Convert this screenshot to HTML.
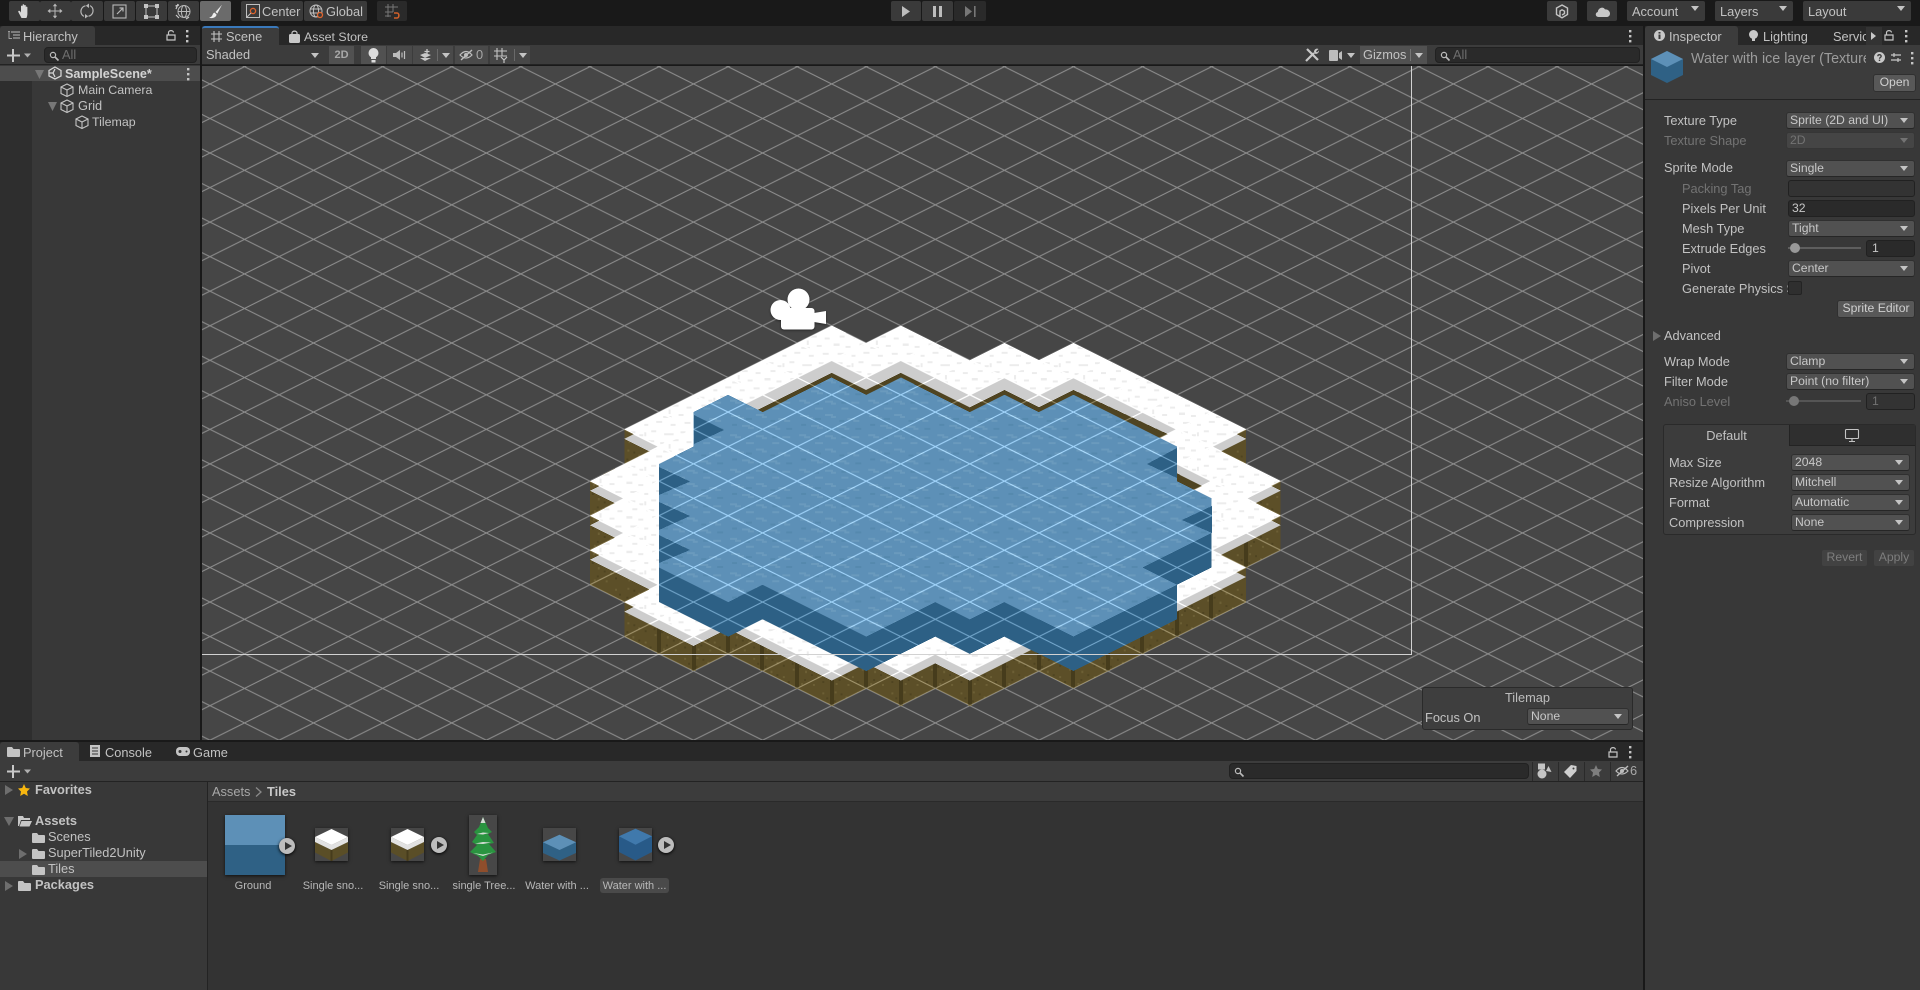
<!DOCTYPE html>
<html><head><meta charset="utf-8"><title>Unity</title>
<style>
html,body{margin:0;padding:0;width:1920px;height:990px;overflow:hidden;background:#191919;font-family:"Liberation Sans",sans-serif;font-size:12.8px;color:#c2c2c2}
div,span{box-sizing:border-box}
.a,.t,.b,.dd,.f,.i{position:absolute}
.t{white-space:nowrap;line-height:16px;height:16px}
.bd{font-weight:bold}
.dis{color:#737373}
.b{top:1px;height:20px;background:#3a3a3a;border-radius:2px}
.b.dim{background:#2a2a2a}
.i{display:block;overflow:visible}
.dd{height:17px;background:#515151;border:1px solid #303030;border-bottom-color:#262626;border-radius:3px;line-height:14px;padding-left:3px;white-space:nowrap;color:#c8c8c8;font-size:12.2px}
.dd:after{content:"";position:absolute;right:6px;top:5px;border-left:4px solid transparent;border-right:4px solid transparent;border-top:5px solid #c4c4c4}
.dd.off{background:#454545;color:#737373;border-color:#363636}
.dd.off:after{border-top-color:#737373}
.f{height:17px;background:#2a2a2a;border:1px solid #212121;border-radius:3px;line-height:15px;padding-left:3px;color:#c8c8c8;font-size:12.2px}
.sr{position:absolute;height:16px;background:#2a2a2a;border:1px solid #212121;border-radius:4px;line-height:14px;color:#6d6d6d;padding-left:17px}
.sr svg{position:absolute;left:4px;top:3px}
.btn{position:absolute;height:18px;background:#585858;border:1px solid #303030;border-radius:3px;text-align:center;line-height:15px;color:#d0d0d0;font-size:12.2px}
.tab{position:absolute;top:26px;height:19px;background:#3c3c3c;border-radius:3px 3px 0 0}
.th{position:absolute;background:#474747;box-shadow:0 1px 3px #111;overflow:hidden}
.lbl{position:absolute;top:879px;height:14px;line-height:14px;font-size:11px;text-align:center;color:#b8b8b8;white-space:nowrap}
.pl{position:absolute;width:16px;height:16px;border-radius:50%;background:#bdbdbd;box-shadow:0 1px 3px #000}
.pl:after{content:"";position:absolute;left:5.5px;top:3.5px;border-left:7px solid #333;border-top:4.5px solid transparent;border-bottom:4.5px solid transparent}
</style></head>
<body>
<svg width="0" height="0" style="position:absolute">
<defs>
<g id="cb"><path d="M7 1 L13 4 V10.5 L7 13.5 L1 10.5 V4 Z M1 4 L7 7 L13 4 M7 7 V13.5" fill="none" stroke="#c4c4c4" stroke-width="1.1"/></g>
<g id="lk"><path d="M1 6 H9 V11 H1 Z" fill="none" stroke="#c4c4c4" stroke-width="1.2"/><path d="M2.5 6 V3.5 C2.5 1 7.5 1 7.5 3.5" fill="none" stroke="#c4c4c4" stroke-width="1.2"/></g>
<g id="dt"><rect x="0" y="0" width="2.4" height="2.4" fill="#c4c4c4"/><rect x="0" y="5" width="2.4" height="2.4" fill="#c4c4c4"/><rect x="0" y="10" width="2.4" height="2.4" fill="#c4c4c4"/></g>
<g id="mg"><circle cx="4" cy="4" r="2.6" fill="none" stroke="#bbb" stroke-width="1.2"/><path d="M6 6 L9.5 9.5" stroke="#bbb" stroke-width="1.6"/></g>
<g id="fd"><path d="M0 2 Q0 1 1 1 H5 L6.5 3 H12 Q13 3 13 4 V10 Q13 11 12 11 H1 Q0 11 0 10 Z" fill="#c4c4c4"/></g>
<g id="ey"><path d="M1 7 Q7 0 13 7 Q7 13 1 7 Z" fill="none" stroke="#bdbdbd" stroke-width="1.2"/><circle cx="7" cy="7" r="2" fill="#bdbdbd"/><path d="M2 12 L13 2" stroke="#bdbdbd" stroke-width="1.4"/></g>
<pattern id="grd" patternUnits="userSpaceOnUse" x="935.3" y="515.7" width="69.08" height="34.54">
<path d="M0 0 L69.08 34.54 M0 34.54 L69.08 0" fill="none" stroke="#484848" stroke-width="1"/>
</pattern>
<pattern id="snw" patternUnits="userSpaceOnUse" x="624.4" y="325.7" width="69.08" height="34.54" shape-rendering="crispEdges">
<rect width="69.08" height="34.54" fill="#fff"/>
<g fill="#ececec"><rect x="4" y="2" width="7" height="2"/><rect x="15" y="5" width="4" height="2"/><rect x="27" y="1" width="5" height="2"/><rect x="40" y="4" width="9" height="2"/><rect x="56" y="2" width="5" height="2"/><rect x="8" y="10" width="5" height="2"/><rect x="22" y="11" width="8" height="2"/><rect x="36" y="13" width="4" height="2"/><rect x="48" y="10" width="6" height="2"/><rect x="62" y="12" width="5" height="2"/><rect x="2" y="18" width="6" height="2"/><rect x="14" y="20" width="5" height="2"/><rect x="28" y="18" width="4" height="2"/><rect x="39" y="21" width="8" height="2"/><rect x="54" y="19" width="5" height="2"/><rect x="6" y="27" width="8" height="2"/><rect x="20" y="29" width="4" height="2"/><rect x="32" y="26" width="6" height="2"/><rect x="46" y="29" width="5" height="2"/><rect x="60" y="27" width="6" height="2"/><rect x="20" y="3" width="2" height="4"/><rect x="44" y="15" width="2" height="4"/></g></pattern>
<pattern id="wat" patternUnits="userSpaceOnUse" x="659" y="377.5" width="69.08" height="34.54" shape-rendering="crispEdges">
<rect width="69.08" height="34.54" fill="#5d90b7"/>
<g fill="#6a9abd"><rect x="3" y="3" width="9" height="2"/><rect x="10" y="5" width="6" height="2"/><rect x="28" y="2" width="8" height="2"/><rect x="34" y="4" width="5" height="2"/><rect x="50" y="6" width="8" height="2"/><rect x="56" y="8" width="6" height="2"/><rect x="14" y="13" width="8" height="2"/><rect x="20" y="15" width="6" height="2"/><rect x="40" y="14" width="9" height="2"/><rect x="47" y="16" width="5" height="2"/><rect x="2" y="22" width="7" height="2"/><rect x="7" y="24" width="6" height="2"/><rect x="28" y="23" width="8" height="2"/><rect x="34" y="25" width="5" height="2"/><rect x="54" y="24" width="8" height="2"/><rect x="18" y="30" width="8" height="2"/><rect x="44" y="30" width="7" height="2"/></g>
<g fill="#5589ae"><rect x="18" y="6" width="6" height="2"/><rect x="42" y="8" width="5" height="2"/><rect x="4" y="12" width="5" height="2"/><rect x="30" y="17" width="6" height="2"/><rect x="58" y="16" width="6" height="2"/><rect x="16" y="25" width="6" height="2"/><rect x="44" y="24" width="5" height="2"/></g></pattern>
<pattern id="brn" patternUnits="userSpaceOnUse" x="589.9" y="481.2" width="34.54" height="34.54" shape-rendering="crispEdges">
<rect width="34.54" height="34.54" fill="#5c4f28"/>
<g fill="#6c5f35"><rect x="3" y="3" width="2" height="2"/><rect x="14" y="8" width="2" height="2"/><rect x="25" y="4" width="2" height="2"/><rect x="8" y="17" width="2" height="2"/><rect x="20" y="22" width="2" height="2"/><rect x="30" y="15" width="2" height="2"/><rect x="4" y="29" width="2" height="2"/><rect x="16" y="30" width="2" height="2"/></g>
<g fill="#4f4421"><rect x="9" y="5" width="2" height="2"/><rect x="20" y="11" width="2" height="2"/><rect x="2" y="12" width="2" height="2"/><rect x="29" y="9" width="2" height="2"/><rect x="14" y="20" width="2" height="2"/><rect x="25" y="27" width="2" height="2"/><rect x="7" y="25" width="2" height="2"/></g></pattern>
<polygon id="snowp" points="624.4,429.4 831.7,325.7 866.2,343 900.8,325.7 969.8,360.3 1004.4,343 1038.9,360.3 1073.5,343 1246.2,429.4 1211.6,446.6 1280.7,481.2 1246.2,498.4 1280.7,515.7 1211.6,550.2 1246.2,567.5 1073.5,653.9 1038.9,636.6 969.8,671.1 935.3,653.9 900.8,671.1 866.2,653.9 831.7,671.1 728.1,619.3 693.5,636.6 624.4,602.1 659,584.8 589.9,550.2 624.4,533 589.9,515.7 624.4,498.4 589.9,481.2 659,446.6"/>
</defs></svg>

<!-- top toolbar -->
<div class="b" style="left:9px;width:31px"><svg class="i" style="left:7px;top:2px" width="16" height="16" viewBox="0 0 16 16"><path d="M5.5 15 L2.3 9 C1.8 7.8 3.3 7.2 4.1 8.3 L5 9.6 V3.4 C5 2.4 6.6 2.4 6.6 3.4 V8 V2 C6.6 1 8.2 1 8.2 2 V8 V2.8 C8.2 1.8 9.8 1.8 9.8 2.8 V8.5 V4.4 C9.8 3.4 11.4 3.4 11.4 4.4 V10.5 C11.4 12.5 11 13.8 10.4 15 Z" fill="#d8d8d8"/></svg></div>
<div class="b" style="left:40px;width:31px"><svg class="i" style="left:7px;top:2px" width="16" height="16" viewBox="0 0 16 16"><path d="M8 3 V13 M3 8 H13" stroke="#b8b8b8" stroke-width="1"/><path d="M8 0.5 L10.2 3.3 H5.8 Z M8 15.5 L10.2 12.7 H5.8 Z M0.5 8 L3.3 5.8 V10.2 Z M15.5 8 L12.7 5.8 V10.2 Z" fill="#b8b8b8"/></svg></div>
<div class="b" style="left:71px;width:32px"><svg class="i" style="left:8px;top:2px" width="16" height="16" viewBox="0 0 16 16"><path d="M6.5 2.8 C2.5 3.6 0.8 8 2.8 11.4 C3.4 12.4 4.2 13 5 13.4 M9.5 13.2 C13.5 12.4 15.2 8 13.2 4.6 C12.6 3.6 11.8 3 11 2.6" fill="none" stroke="#b8b8b8" stroke-width="1.2"/><path d="M10 0.5 V5 L6.8 2.8 Z M6 11 V15.5 L9.2 13.2 Z" fill="#b8b8b8"/></svg></div>
<div class="b" style="left:104px;width:31px"><svg class="i" style="left:8px;top:3px" width="15" height="15" viewBox="0 0 15 15"><rect x="1" y="1" width="13" height="13" fill="none" stroke="#b8b8b8" stroke-width="1.1"/><path d="M5 10 L11 4 M7.5 4 H11 V7.5" fill="none" stroke="#b8b8b8" stroke-width="1.2"/></svg></div>
<div class="b" style="left:136px;width:31px"><svg class="i" style="left:8px;top:3px" width="15" height="15" viewBox="0 0 15 15"><rect x="2" y="2" width="11" height="11" fill="none" stroke="#c4c4c4" stroke-width="1"/><g fill="#c4c4c4"><rect x="0" y="0" width="4" height="4"/><rect x="11" y="0" width="4" height="4"/><rect x="0" y="11" width="4" height="4"/><rect x="11" y="11" width="4" height="4"/></g></svg></div>
<div class="b" style="left:168px;width:31px"><svg class="i" style="left:7px;top:2px" width="17" height="17" viewBox="0 0 17 17"><circle cx="9" cy="8.5" r="6" fill="none" stroke="#b8b8b8" stroke-width="1"/><ellipse cx="9" cy="8.5" rx="2.6" ry="6" fill="none" stroke="#b8b8b8"/><path d="M3 8.5 H15" stroke="#b8b8b8"/><path d="M0.5 3 L4 2 M3 1 L1 6 M1 12 L4 15 M11 16 L14 14" stroke="#c8c8c8" stroke-width="1.2" fill="none"/></svg></div>
<div class="b" style="left:200px;width:31px;background:#6b6b6b"><svg class="i" style="left:8px;top:3px" width="15" height="15" viewBox="0 0 15 15"><path d="M14 0.8 L7.5 8 L9.3 9.6 Z" fill="#eee"/><path d="M6.6 8.6 C4.5 9 5 11 3.6 12.4 C2.8 13.2 1.6 13.5 1 13.6 C3.5 14.6 7.6 14.2 8.6 10.6 Z" fill="#eee"/></svg></div>
<div class="b" style="left:241px;width:62px"><svg class="i" style="left:5px;top:3px" width="14" height="14" viewBox="0 0 14 14"><rect x="0.5" y="0.5" width="13" height="13" fill="none" stroke="#c0c0c0"/><circle cx="7" cy="7" r="2.6" fill="none" stroke="#e2642c" stroke-width="1.3"/><path d="M1 13 L5 9" stroke="#c0c0c0"/></svg><span class="t" style="left:21px;top:3px">Center</span></div>
<div class="b" style="left:304px;width:63px"><svg class="i" style="left:5px;top:3px" width="15" height="15" viewBox="0 0 15 15"><circle cx="7" cy="7" r="6" fill="none" stroke="#c0c0c0"/><ellipse cx="7" cy="7" rx="2.6" ry="6" fill="none" stroke="#c0c0c0"/><path d="M1 5 H13 M1 9 H13" stroke="#c0c0c0"/><circle cx="11" cy="11" r="2.5" fill="#3a3a3a" stroke="#e2642c" stroke-width="1.3"/></svg><span class="t" style="left:22px;top:3px">Global</span></div>
<div class="b dim" style="left:377px;width:30px"><svg class="i" style="left:8px;top:3px" width="15" height="15" viewBox="0 0 15 15"><path d="M3 0 V13 M8 0 V8 M0 3 H13 M0 8 H8 M0 12 H6" stroke="#777" stroke-width="1"/><path d="M9 9 H12 C14.5 9 14.5 14 12 14 H9" fill="none" stroke="#d0602a" stroke-width="1.6"/></svg></div>

<div class="b" style="left:891px;width:30px"><svg class="i" style="left:10px;top:5px" width="10" height="11" viewBox="0 0 10 11"><path d="M1 0 L9 5.5 L1 11 Z" fill="#bdbdbd"/></svg></div>
<div class="b" style="left:922px;width:31px"><svg class="i" style="left:11px;top:5px" width="9" height="11" viewBox="0 0 9 11"><rect x="0" width="3" height="11" fill="#bdbdbd"/><rect x="6" width="3" height="11" fill="#bdbdbd"/></svg></div>
<div class="b dim" style="left:954px;width:32px"><svg class="i" style="left:11px;top:5px" width="11" height="11" viewBox="0 0 11 11"><path d="M0 0 L7 5.5 L0 11 Z" fill="#777"/><rect x="9" width="1.6" height="11" fill="#777"/></svg></div>

<div class="b" style="left:1547px;width:30px"><svg class="i" style="left:8px;top:3px" width="14" height="15" viewBox="0 0 14 15"><path d="M7 1 L12.5 4 V10.5 L7 13.8 L1.5 10.5 V4 Z M5 12 V7 L7 5.8 L9.5 7.2 V9.5 L7 11" fill="none" stroke="#c4c4c4" stroke-width="1.4"/></svg></div>
<div class="b" style="left:1587px;width:30px"><svg class="i" style="left:8px;top:5px" width="15" height="11" viewBox="0 0 15 11"><path d="M3.5 11 C0 11 0 6.5 2.8 6 C3 2 8 0 10 3.4 C13 3 15 5.5 15 7.5 C15 10 13 11 12 11 Z" fill="#c8c8c8"/></svg></div>
<div class="dd" style="left:1627px;top:1px;width:78px;height:20px;background:#3a3a3a;border:0;line-height:22px;padding-left:5px;border-radius:2px;color:#c2c2c2;font-size:12.8px">Account</div>
<div class="dd" style="left:1715px;top:1px;width:78px;height:20px;background:#3a3a3a;border:0;line-height:22px;padding-left:5px;border-radius:2px;color:#c2c2c2;font-size:12.8px">Layers</div>
<div class="dd" style="left:1803px;top:1px;width:108px;height:20px;background:#3a3a3a;border:0;line-height:22px;padding-left:5px;border-radius:2px;color:#c2c2c2;font-size:12.8px">Layout</div>

<!-- hierarchy panel -->
<div class="a" style="left:0;top:26px;width:200px;height:714px;background:#383838"></div>
<div class="a" style="left:0;top:26px;width:200px;height:19px;background:#282828"></div>
<div class="tab" style="left:0;width:95px"></div>
<svg class="i" style="left:8px;top:31px" width="12" height="10" viewBox="0 0 12 10"><path d="M3 1 H12 M5 4 H12 M5 7 H12" stroke="#bbb" stroke-width="1"/><path d="M0 0.5 H2 M1 1 V7.5 H4" stroke="#bbb" fill="none" stroke-width=".8"/></svg>
<div class="t" style="left:23px;top:29px">Hierarchy</div>
<svg class="i" style="left:166px;top:29px" width="10" height="12"><use href="#lk"/></svg>
<svg class="i" style="left:186px;top:30px" width="3" height="13"><use href="#dt"/></svg>
<div class="a" style="left:0;top:45px;width:200px;height:20px;background:#3c3c3c;border-bottom:1px solid #232323"></div>
<svg class="i" style="left:7px;top:49px" width="24" height="13" viewBox="0 0 24 13"><path d="M6 0 V13 M0 6.5 H13" stroke="#c8c8c8" stroke-width="2"/><path d="M17 4.5 H24 L20.5 8.5 Z" fill="#b0b0b0"/></svg>
<div class="sr" style="left:44px;top:47px;width:153px"><svg width="11" height="11"><use href="#mg"/></svg>All</div>
<div class="a" style="left:0;top:66px;width:32px;height:674px;background:#2e2e2e"></div>
<div class="a" style="left:0;top:66px;width:200px;height:15px;background:#4d4d4d"></div>
<svg class="i" style="left:35px;top:70px" width="9" height="9"><path d="M0 0 H9 L4.5 9 Z" fill="#777"/></svg>
<svg class="i" style="left:48px;top:66px" width="14" height="14" viewBox="0 0 14 14"><path d="M7 1 L13 4.5 V10 L7 13 L1 10 V4.5 Z M1 7 H5 L7 3 M7 11 L5 7" fill="none" stroke="#d4d4d4" stroke-width="1.3"/></svg>
<div class="t bd" style="left:65px;top:66px;color:#d4d4d4;font-size:12.6px">SampleScene*</div>
<svg class="i" style="left:187px;top:68px" width="3" height="13"><use href="#dt"/></svg>
<svg class="i" style="left:60px;top:83px" width="14" height="14"><use href="#cb"/></svg>
<div class="t" style="left:78px;top:82px;font-size:12.4px">Main Camera</div>
<svg class="i" style="left:48px;top:102px" width="9" height="9"><path d="M0 0 H9 L4.5 9 Z" fill="#777"/></svg>
<svg class="i" style="left:60px;top:99px" width="14" height="14"><use href="#cb"/></svg>
<div class="t" style="left:78px;top:98px">Grid</div>
<svg class="i" style="left:75px;top:115px" width="14" height="14"><use href="#cb"/></svg>
<div class="t" style="left:92px;top:114px;font-size:12.4px">Tilemap</div>

<!-- scene header -->
<div class="a" style="left:202px;top:26px;width:1441px;height:19px;background:#282828"></div>
<div class="tab" style="left:202px;width:77px;border-top:2px solid #3a79bb"></div>
<svg class="i" style="left:211px;top:31px" width="11" height="11" viewBox="0 0 11 11"><path d="M3 0 V11 M8 0 V11 M0 3 H11 M0 8 H11" stroke="#c4c4c4" stroke-width="1.1"/></svg>
<div class="t" style="left:226px;top:29px">Scene</div>
<svg class="i" style="left:289px;top:30px" width="11" height="13" viewBox="0 0 11 13"><rect y="4" width="11" height="9" rx="1.5" fill="#c8c8c8"/><path d="M3 5 V3 C3 0.5 8 0.5 8 3 V5" fill="none" stroke="#c8c8c8" stroke-width="1.2"/></svg>
<div class="t" style="left:304px;top:29px;font-size:12.4px">Asset Store</div>
<svg class="i" style="left:1629px;top:30px" width="3" height="13"><use href="#dt"/></svg>
<div class="a" style="left:202px;top:45px;width:1441px;height:20px;background:#3c3c3c;border-bottom:1px solid #232323"></div>
<div class="t" style="left:206px;top:47px">Shaded</div>
<svg class="i" style="left:311px;top:53px" width="8" height="5"><path d="M0 0 H8 L4 5 Z" fill="#c4c4c4"/></svg>
<div class="a" style="left:329px;top:46px;width:25px;height:18px;background:#515151;text-align:center;line-height:18px;font-size:11px;font-weight:bold;color:#a8a8a8">2D</div>
<div class="a" style="left:361px;top:46px;width:25px;height:18px;background:#515151"></div>
<svg class="i" style="left:368px;top:48px" width="11" height="15" viewBox="0 0 11 15"><circle cx="5.5" cy="5" r="5" fill="#ddd"/><rect x="3" y="8" width="5" height="3" fill="#ddd"/><rect x="3.5" y="12" width="4" height="2.5" fill="#ddd"/></svg>
<div class="a" style="left:387px;top:46px;width:25px;height:18px;background:#4a4a4a"></div>
<svg class="i" style="left:393px;top:49px" width="13" height="12" viewBox="0 0 13 12"><path d="M0 4 H3 L7 1 V11 L3 8 H0 Z" fill="#bdbdbd"/><path d="M9 3.5 V8.5 M11.5 2 V10" stroke="#bdbdbd" stroke-width="1.2"/></svg>
<div class="a" style="left:413px;top:46px;width:40px;height:18px;background:#4a4a4a"></div>
<svg class="i" style="left:418px;top:48px" width="15" height="14" viewBox="0 0 15 14"><path d="M2 7 L7 5 L13 7 L7 10 Z M2 10 L7 13 L13 10" fill="#c8c8c8"/><path d="M9 1 V6 M6.5 3.5 H11.5" stroke="#c8c8c8" stroke-width="1.3"/></svg>
<div class="a" style="left:437px;top:49px;width:1px;height:12px;background:#6a6a6a"></div>
<svg class="i" style="left:442px;top:53px" width="8" height="5"><path d="M0 0 H8 L4 5 Z" fill="#c4c4c4"/></svg>
<div class="a" style="left:455px;top:46px;width:33px;height:18px;background:#4a4a4a"></div>
<svg class="i" style="left:459px;top:48px" width="14" height="14"><use href="#ey"/></svg>
<div class="t" style="left:476px;top:47px;color:#a8a8a8">0</div>
<div class="a" style="left:490px;top:46px;width:40px;height:18px;background:#474747"></div>
<svg class="i" style="left:494px;top:48px" width="14" height="15" viewBox="0 0 14 15"><path d="M3 0 V12 M8 0 V8 M0 3 H13 M0 8 H13" stroke="#c4c4c4" stroke-width="1.1"/><path d="M7 9 L10 12 L13 9 M10 12 V15" stroke="#c4c4c4" stroke-width="1.2" fill="none"/></svg>
<div class="a" style="left:514px;top:49px;width:1px;height:12px;background:#6a6a6a"></div>
<svg class="i" style="left:519px;top:53px" width="8" height="5"><path d="M0 0 H8 L4 5 Z" fill="#c4c4c4"/></svg>

<svg class="i" style="left:1305px;top:48px" width="14" height="14" viewBox="0 0 14 14"><path d="M1 13 L9 5 M2 1 L13 12" stroke="#c8c8c8" stroke-width="2.2"/><path d="M9 4 C9 1.5 11.5 0 13.5 1 L11 3.3 L12 4.5 L14 2.5 C14 5 12 6.5 9.5 5.5 Z" fill="#c8c8c8"/></svg>
<svg class="i" style="left:1329px;top:50px" width="14" height="11" viewBox="0 0 14 11"><rect width="9" height="11" rx="1" fill="#bdbdbd"/><path d="M10 3 L13 1 V10 L10 8 Z" fill="#bdbdbd"/></svg>
<svg class="i" style="left:1347px;top:53px" width="8" height="5"><path d="M0 0 H8 L4 5 Z" fill="#c4c4c4"/></svg>
<div class="a" style="left:1360px;top:46px;width:67px;height:18px;background:#515151"></div>
<div class="t" style="left:1363px;top:47px">Gizmos</div>
<div class="a" style="left:1410px;top:49px;width:1px;height:12px;background:#757575"></div>
<svg class="i" style="left:1415px;top:53px" width="8" height="5"><path d="M0 0 H8 L4 5 Z" fill="#c4c4c4"/></svg>
<div class="sr" style="left:1435px;top:47px;width:205px"><svg width="11" height="11"><use href="#mg"/></svg>All</div>

<!-- scene view -->
<svg class="i" style="left:202px;top:66px;background:#464646;overflow:hidden" width="1441" height="674" viewBox="202 66 1441 674">
<polygon fill="url(#brn)" shape-rendering="crispEdges" points="624.4,429.4 831.7,325.7 866.2,343 900.8,325.7 969.8,360.3 1004.4,343 1038.9,360.3 1073.5,343 1246.2,429.4 1246.2,463.9 1280.7,481.2 1280.7,550.2 1246.2,567.5 1246.2,602.1 1073.5,688.4 1038.9,671.1 969.8,705.7 935.3,688.4 900.8,705.7 866.2,688.4 831.7,705.7 728.1,653.9 693.5,671.1 624.4,636.6 624.4,602.1 589.9,584.8 589.9,481.2 624.4,463.9"/>
<g fill="#463c1c" shape-rendering="crispEdges">
<rect x="657" y="619" width="4" height="36"/><rect x="692" y="637" width="4" height="34"/><rect x="726" y="619" width="4" height="35"/><rect x="760" y="637" width="4" height="34"/><rect x="795" y="654" width="4" height="35"/><rect x="830" y="671" width="4" height="35"/><rect x="864" y="654" width="4" height="34"/><rect x="899" y="671" width="4" height="35"/><rect x="933" y="654" width="4" height="34"/><rect x="968" y="671" width="4" height="35"/><rect x="1002" y="654" width="4" height="34"/><rect x="1037" y="637" width="4" height="34"/><rect x="1071" y="654" width="4" height="34"/><rect x="1106" y="637" width="4" height="34"/><rect x="1140" y="619" width="4" height="35"/><rect x="1175" y="602" width="4" height="35"/><rect x="1209" y="585" width="4" height="35"/><rect x="1244" y="533" width="4" height="35"/><rect x="622" y="533" width="4" height="35"/><rect x="622" y="498" width="4" height="35"/><rect x="1244" y="498" width="4" height="35"/>
</g>
<use href="#snowp" fill="#cdcdcd" y="9.5" shape-rendering="crispEdges"/>
<use href="#snowp" fill="url(#snw)" shape-rendering="crispEdges"/>
<!-- inner back edge of the snow ring: brown wall and grey snow lip behind the water -->
<polygon fill="#4f4421" shape-rendering="crispEdges" points="728.1,412.1 831.7,360.3 866.2,377.5 900.8,360.3 969.8,394.8 1004.4,377.5 1038.9,394.8 1073.5,377.5 1177.1,429.4 1142.5,446.6 1073.5,450 760,450"/>
<polygon fill="#cdcdcd" shape-rendering="crispEdges" points="728.1,412.1 831.7,360.3 866.2,377.5 900.8,360.3 969.8,394.8 1004.4,377.5 1038.9,394.8 1073.5,377.5 1177.1,429.4 1167.7,434.1 1073.5,390 1038.9,407.3 1004.4,390 969.8,407.3 900.8,372.8 866.2,390 831.7,372.8 728.1,424.6"/>
<polygon fill="#4f4421" shape-rendering="crispEdges" points="1177.1,463.9 1211.6,481.2 1177.1,498.4"/>
<polygon fill="#cdcdcd" shape-rendering="crispEdges" points="1177.1,463.9 1211.6,481.2 1202,486 1177.1,473.4"/>
<polygon fill="#2d6085" shape-rendering="crispEdges" points="693.5,412.1 728.1,394.8 762.6,412.1 831.7,377.5 866.2,394.8 900.8,377.5 969.8,412.1 1004.4,394.8 1038.9,412.1 1073.5,394.8 1177.1,446.6 1177.1,481.2 1211.6,498.4 1211.6,567.5 1177.1,584.8 1177.1,619.3 1073.5,671.1 1004.4,636.6 969.8,653.9 935.3,636.6 866.2,671.1 762.6,619.3 728.1,636.6 659,602.1 659,463.9 693.5,446.6"/>
<polygon fill="url(#wat)" shape-rendering="crispEdges" points="693.5,412.1 728.1,394.8 762.6,412.1 831.7,377.5 866.2,394.8 900.8,377.5 969.8,412.1 1004.4,394.8 1038.9,412.1 1073.5,394.8 1177.1,446.6 1177.1,481.2 1211.6,498.4 1211.6,533 1142.5,567.5 1177.1,584.8 1073.5,636.6 1004.4,602.1 969.8,619.3 935.3,602.1 866.2,636.6 762.6,584.8 728.1,602.1 659,567.5 659,463.9 693.5,446.6"/>
<g fill="#2d6085" shape-rendering="crispEdges">
<polygon points="694,415 724,430 694,444"/>
<polygon points="659,467 690,481.5 659,495"/>
<polygon points="659,502 690,516 659,530"/>
<polygon points="659,535 690,550 659,563"/>
<polygon points="1177,448 1147,464 1177,478"/>
<polygon points="1212,506 1182,520 1212,533"/>
</g>
<rect x="202" y="66" width="1441" height="674" fill="url(#grd)" style="mix-blend-mode:plus-lighter"/>
<path d="M1411.5 66 V654.5 H202" fill="none" stroke="#d2d2d2" stroke-width="1" shape-rendering="crispEdges"/>
<g fill="#fff" style="filter:drop-shadow(0 1px 1px rgba(0,0,0,.45))">
<circle cx="798.5" cy="299.5" r="11"/><circle cx="780.5" cy="310" r="10"/><rect x="781" y="308" width="33.5" height="21.5" rx="3"/><path d="M814 313 L826 311 V324 L814 322 Z"/>
</g>
</svg>

<!-- tilemap overlay -->
<div class="a" style="left:1422px;top:687px;width:211px;height:43px;background:#3e3e3e;border:1px solid #2a2a2a;border-radius:3px"></div>
<div class="t" style="left:1422px;top:690px;width:211px;text-align:center;color:#bdbdbd">Tilemap</div>
<div class="t" style="left:1425px;top:710px">Focus On</div>
<div class="dd" style="left:1527px;top:708px;width:102px">None</div>

<!-- project panel -->
<div class="a" style="left:0;top:742px;width:1643px;height:248px;background:#333"></div>
<div class="a" style="left:0;top:742px;width:1643px;height:19px;background:#282828"></div>
<div class="tab" style="left:0;top:742px;width:79px"></div>
<svg class="i" style="left:7px;top:746px" width="13" height="12"><use href="#fd"/></svg>
<div class="t" style="left:23px;top:745px">Project</div>
<svg class="i" style="left:90px;top:745px" width="10" height="12" viewBox="0 0 10 12"><rect width="10" height="12" fill="#c4c4c4"/><path d="M2 3 H8 M2 6 H8 M2 9 H8" stroke="#333" stroke-width="1"/></svg>
<div class="t" style="left:105px;top:745px">Console</div>
<svg class="i" style="left:176px;top:747px" width="14" height="9" viewBox="0 0 14 9"><rect width="14" height="9" rx="4" fill="#c4c4c4"/><circle cx="4" cy="4.5" r="1.5" fill="#333"/><circle cx="10.5" cy="4.5" r="1" fill="#333"/></svg>
<div class="t" style="left:193px;top:745px">Game</div>
<svg class="i" style="left:1608px;top:746px" width="10" height="12"><use href="#lk"/></svg>
<svg class="i" style="left:1629px;top:746px" width="3" height="13"><use href="#dt"/></svg>
<div class="a" style="left:0;top:761px;width:1643px;height:21px;background:#3c3c3c;border-bottom:1px solid #232323"></div>
<svg class="i" style="left:7px;top:765px" width="24" height="13" viewBox="0 0 24 13"><path d="M6 0 V13 M0 6.5 H13" stroke="#c8c8c8" stroke-width="2"/><path d="M17 4.5 H24 L20.5 8.5 Z" fill="#b0b0b0"/></svg>
<div class="sr" style="left:1229px;top:763px;width:300px;padding:0"><svg width="11" height="11"><use href="#mg"/></svg></div>
<div class="a" style="left:1532px;top:762px;width:1px;height:19px;background:#2a2a2a"></div>
<svg class="i" style="left:1537px;top:763px" width="15" height="16" viewBox="0 0 15 16"><circle cx="5" cy="11" r="4.5" fill="#c4c4c4"/><rect x="1" y="0.5" width="7" height="6" fill="#c4c4c4"/><path d="M9 8 L11.5 3 L14.5 9 Z" fill="#c4c4c4"/></svg>
<div class="a" style="left:1558px;top:762px;width:1px;height:19px;background:#2a2a2a"></div>
<svg class="i" style="left:1564px;top:765px" width="13" height="13" viewBox="0 0 13 13"><path d="M0 7 L7 0 L12.5 1 V6 L6 13 Z" fill="#cfcfcf"/><circle cx="9.5" cy="3.5" r="1" fill="#3c3c3c"/></svg>
<div class="a" style="left:1584px;top:762px;width:1px;height:19px;background:#2a2a2a"></div>
<svg class="i" style="left:1590px;top:765px" width="12" height="12" viewBox="0 0 12 12"><path d="M6 0 L7.8 4 L12 4.5 L9 7.5 L9.8 12 L6 9.8 L2.2 12 L3 7.5 L0 4.5 L4.2 4 Z" fill="#7e7e7e"/></svg>
<div class="a" style="left:1610px;top:762px;width:1px;height:19px;background:#2a2a2a"></div>
<svg class="i" style="left:1615px;top:764px" width="14" height="14"><use href="#ey"/></svg>
<div class="t" style="left:1630px;top:763px;color:#a8a8a8">6</div>

<div class="a" style="left:0;top:782px;width:207px;height:208px;background:#383838"></div>
<div class="a" style="left:207px;top:782px;width:1px;height:208px;background:#232323"></div>
<div class="a" style="left:208px;top:782px;width:1435px;height:20px;background:#3c3c3c;border-bottom:1px solid #2a2a2a"></div>
<svg class="i" style="left:5px;top:785px" width="8" height="10"><path d="M0 0 L8 5 L0 10 Z" fill="#6e6e6e"/></svg>
<svg class="i" style="left:18px;top:784px" width="12" height="12" viewBox="0 0 12 12"><path d="M6 0 L7.8 4 L12 4.5 L9 7.5 L9.8 12 L6 9.8 L2.2 12 L3 7.5 L0 4.5 L4.2 4 Z" fill="#f7b60f"/></svg>
<div class="t bd" style="left:35px;top:782px">Favorites</div>
<svg class="i" style="left:4px;top:817px" width="10" height="9"><path d="M0 0 H10 L5 9 Z" fill="#6e6e6e"/></svg>
<svg class="i" style="left:18px;top:815px" width="14" height="12" viewBox="0 0 14 12"><path d="M0 1 H5 L6 3 H12 V5 H3 L1 11 H0 Z M3.5 6 H14 L11.5 11.5 H1.5 Z" fill="#c8c8c8"/></svg>
<div class="t bd" style="left:35px;top:813px">Assets</div>
<svg class="i" style="left:32px;top:832px" width="13" height="12"><use href="#fd"/></svg>
<div class="t" style="left:48px;top:829px">Scenes</div>
<svg class="i" style="left:19px;top:849px" width="8" height="10"><path d="M0 0 L8 5 L0 10 Z" fill="#6e6e6e"/></svg>
<svg class="i" style="left:32px;top:848px" width="13" height="12"><use href="#fd"/></svg>
<div class="t" style="left:48px;top:845px">SuperTiled2Unity</div>
<div class="a" style="left:0;top:861px;width:207px;height:16px;background:#4d4d4d"></div>
<svg class="i" style="left:32px;top:864px" width="13" height="12"><use href="#fd"/></svg>
<div class="t" style="left:48px;top:861px">Tiles</div>
<svg class="i" style="left:5px;top:881px" width="8" height="10"><path d="M0 0 L8 5 L0 10 Z" fill="#6e6e6e"/></svg>
<svg class="i" style="left:18px;top:880px" width="13" height="12"><use href="#fd"/></svg>
<div class="t bd" style="left:35px;top:877px">Packages</div>
<div class="t" style="left:212px;top:784px;color:#a8a8a8">Assets</div>
<svg class="i" style="left:255px;top:787px" width="7" height="10" viewBox="0 0 7 10"><path d="M1 0.5 L6 5 L1 9.5" fill="none" stroke="#8a8a8a" stroke-width="1.3"/></svg>
<div class="t bd" style="left:267px;top:784px;color:#c8c8c8">Tiles</div>

<div class="th" style="left:225px;top:815px;width:60px;height:60px;background:#2f6185"><div class="a" style="left:0;top:0;width:60px;height:30px;background:#5d90b7"></div></div>
<div class="pl" style="left:279px;top:838px"></div>
<svg class="th" style="left:315px;top:828px" width="33" height="33" viewBox="0 0 33 33"><path d="M0 9 L16.5 17 L33 9 V24.5 L16.5 33 L0 24.5 Z" fill="#5a4e27"/><path d="M16.5 21 V33" stroke="#463c1c" stroke-width="2"/><path d="M0 9 L16.5 17 L33 9 V14 L16.5 22 L0 14 Z" fill="#e2e2e2"/><path d="M16.5 1 L33 9 L16.5 17 L0 9 Z" fill="#fff"/></svg>
<svg class="th" style="left:391px;top:828px" width="33" height="33" viewBox="0 0 33 33"><path d="M0 9 L16.5 17 L33 9 V24.5 L16.5 33 L0 24.5 Z" fill="#5a4e27"/><path d="M16.5 21 V33" stroke="#463c1c" stroke-width="2"/><path d="M0 9 L16.5 17 L33 9 V14 L16.5 22 L0 14 Z" fill="#e2e2e2"/><path d="M16.5 1 L33 9 L16.5 17 L0 9 Z" fill="#fff"/></svg>
<div class="pl" style="left:431px;top:837px"></div>
<svg class="th" style="left:469px;top:815px" width="28" height="60" viewBox="0 0 28 60"><path d="M11 44 H17 L19 57 H9 Z" fill="#8f4e2c"/><path d="M14 2 L19 13 L23 17 L19 19 L25 28 L20 29 L27 37 L19 40 L14 46 L9 41 L1 37 L8 30 L3 27 L8 20 L5 17 L10 12 Z" fill="#2a9440"/><path d="M11.5 8 L14 2 L16.5 8 Z M8 19 L14 17.5 L20 18 L14 19.5 Z M6 28.5 L14 27 L22 27.5 L14 29 Z M4 38 L14 39.5 L24 37.5 L14 41 Z" fill="#d4dcd4"/></svg>
<svg class="th" style="left:543px;top:828px" width="33" height="33" viewBox="0 0 33 33"><path d="M0 14.3 L16.5 6.7 L33 14.3 V25 L16.5 32.5 L0 25 Z" fill="#2f6185"/><path d="M16.5 6.7 L33 14.3 L16.5 22 L0 14.3 Z" fill="#5d90b7"/></svg>
<svg class="th" style="left:619px;top:828px" width="33" height="33" viewBox="0 0 33 33"><path d="M0 8.3 L16.5 0.7 L33 8.3 V24 L16.5 32.5 L0 24 Z" fill="#285a88"/><path d="M16.5 0.7 L33 8.3 L16.5 16.7 L0 8.3 Z" fill="#4079ac"/></svg>
<div class="pl" style="left:658px;top:837px"></div>
<div class="lbl" style="left:213px;width:80px">Ground</div>
<div class="lbl" style="left:298px;width:70px">Single sno...</div>
<div class="lbl" style="left:374px;width:70px">Single sno...</div>
<div class="lbl" style="left:449px;width:70px">single Tree...</div>
<div class="lbl" style="left:522px;width:70px">Water with ...</div>
<div class="a" style="left:600px;top:878px;width:69px;height:15px;background:#4a4a4a;border-radius:3px"></div>
<div class="lbl" style="left:600px;width:69px">Water with ...</div>

<!-- inspector -->
<div class="a" style="left:1645px;top:26px;width:275px;height:964px;background:#383838"></div>
<div class="a" style="left:1645px;top:26px;width:275px;height:19px;background:#282828"></div>
<div class="tab" style="left:1645px;width:93px"></div>
<svg class="i" style="left:1654px;top:30px" width="11" height="11" viewBox="0 0 11 11"><circle cx="5.5" cy="5.5" r="5.5" fill="#c8c8c8"/><rect x="4.5" y="4.5" width="2" height="4.5" fill="#3c3c3c"/><rect x="4.5" y="2" width="2" height="1.6" fill="#3c3c3c"/></svg>
<div class="t" style="left:1669px;top:29px">Inspector</div>
<svg class="i" style="left:1749px;top:30px" width="9" height="13" viewBox="0 0 9 13"><circle cx="4.5" cy="4.5" r="4.5" fill="#c8c8c8"/><rect x="3" y="8" width="3" height="3" fill="#c8c8c8"/></svg>
<div class="t" style="left:1763px;top:29px">Lighting</div>
<div class="t" style="left:1833px;top:29px;width:33px;overflow:hidden">Services</div>
<div class="a" style="left:1866px;top:27px;width:16px;height:18px;background:#333"></div>
<svg class="i" style="left:1871px;top:32px" width="5" height="8"><path d="M0 0 L5 4 L0 8 Z" fill="#c8c8c8"/></svg>
<svg class="i" style="left:1884px;top:29px" width="10" height="12"><use href="#lk"/></svg>
<svg class="i" style="left:1905px;top:30px" width="3" height="13"><use href="#dt"/></svg>
<div class="a" style="left:1645px;top:45px;width:275px;height:55px;background:#3c3c3c;border-bottom:1px solid #232323"></div>
<svg class="i" style="left:1651px;top:51px" width="32" height="32" viewBox="0 0 32 32"><path d="M0 8 L16 0 L32 8 V24 L16 32 L0 24 Z" fill="#2f6185"/><path d="M16 0 L32 8 L16 16 L0 8 Z" fill="#5d90b7"/></svg>
<div class="t" style="left:1691px;top:51px;width:175px;overflow:hidden;font-size:14.3px;color:#9c9c9c">Water with ice layer (Texture Importer)</div>
<svg class="i" style="left:1874px;top:52px" width="11" height="11" viewBox="0 0 11 11"><circle cx="5.5" cy="5.5" r="5.5" fill="#c8c8c8"/><path d="M3.8 4.2 C3.8 2.2 7.2 2.2 7.2 4.2 C7.2 5.4 5.5 5.4 5.5 6.8" fill="none" stroke="#3c3c3c" stroke-width="1.3"/><rect x="4.8" y="7.6" width="1.4" height="1.4" fill="#3c3c3c"/></svg>
<svg class="i" style="left:1891px;top:52px" width="10" height="11" viewBox="0 0 10 11"><path d="M0 3 H10 M0 8 H10 M3 1 V5 M7 6 V10" stroke="#c8c8c8" stroke-width="1.2"/></svg>
<svg class="i" style="left:1911px;top:52px" width="3" height="13"><use href="#dt"/></svg>
<div class="btn" style="left:1873px;top:74px;width:43px">Open</div>

<div class="t" style="left:1664px;top:113px">Texture Type</div><div class="dd" style="left:1786px;top:112px;width:129px">Sprite (2D and UI)</div>
<div class="t dis" style="left:1664px;top:133px">Texture Shape</div><div class="dd off" style="left:1786px;top:132px;width:129px">2D</div>
<div class="t" style="left:1664px;top:160px">Sprite Mode</div><div class="dd" style="left:1786px;top:160px;width:129px">Single</div>
<div class="t dis" style="left:1682px;top:181px">Packing Tag</div><div class="f" style="left:1788px;top:180px;width:127px;background:#333"></div>
<div class="t" style="left:1682px;top:201px">Pixels Per Unit</div><div class="f" style="left:1788px;top:200px;width:127px">32</div>
<div class="t" style="left:1682px;top:221px">Mesh Type</div><div class="dd" style="left:1788px;top:220px;width:127px">Tight</div>
<div class="t" style="left:1682px;top:241px">Extrude Edges</div>
<div class="a" style="left:1788px;top:247px;width:73px;height:2px;background:#5e5e5e"></div><div class="a" style="left:1790px;top:243px;width:10px;height:10px;border-radius:50%;background:#999"></div><div class="f" style="left:1866px;top:240px;width:49px;padding-left:5px">1</div>
<div class="t" style="left:1682px;top:261px">Pivot</div><div class="dd" style="left:1788px;top:260px;width:127px">Center</div>
<div class="t" style="left:1682px;top:281px;width:106px;overflow:hidden">Generate Physics Shape</div><div class="a" style="left:1788px;top:281px;width:14px;height:14px;background:#2f2f2f;border:1px solid #232323;border-radius:2px"></div>
<div class="btn" style="left:1837px;top:300px;width:78px">Sprite Editor</div>
<svg class="i" style="left:1653px;top:331px" width="8" height="10"><path d="M0 0 L8 5 L0 10 Z" fill="#6e6e6e"/></svg>
<div class="t" style="left:1664px;top:328px">Advanced</div>
<div class="t" style="left:1664px;top:354px">Wrap Mode</div><div class="dd" style="left:1786px;top:353px;width:129px">Clamp</div>
<div class="t" style="left:1664px;top:374px">Filter Mode</div><div class="dd" style="left:1786px;top:373px;width:129px">Point (no filter)</div>
<div class="t dis" style="left:1664px;top:394px">Aniso Level</div>
<div class="a" style="left:1786px;top:400px;width:75px;height:2px;background:#555"></div><div class="a" style="left:1789px;top:396px;width:10px;height:10px;border-radius:50%;background:#777"></div><div class="f" style="left:1866px;top:393px;width:49px;padding-left:5px;background:#333;color:#737373">1</div>
<div class="a" style="left:1663px;top:424px;width:253px;height:111px;background:#3c3c3c;border:1px solid #2a2a2a;border-radius:3px"></div>
<div class="a" style="left:1789px;top:425px;width:126px;height:21px;background:#2f2f2f;border-left:1px solid #232323;border-bottom:1px solid #232323"></div>
<div class="t" style="left:1664px;top:428px;width:125px;text-align:center">Default</div>
<svg class="i" style="left:1845px;top:429px" width="14" height="13" viewBox="0 0 14 13"><rect x="0.5" y="0.5" width="13" height="9" rx="1" fill="none" stroke="#c4c4c4" stroke-width="1.1"/><path d="M7 10 V12 M4 12.5 H10" stroke="#c4c4c4" stroke-width="1.1"/></svg>
<div class="t" style="left:1669px;top:455px">Max Size</div><div class="dd" style="left:1791px;top:454px;width:119px">2048</div>
<div class="t" style="left:1669px;top:475px">Resize Algorithm</div><div class="dd" style="left:1791px;top:474px;width:119px">Mitchell</div>
<div class="t" style="left:1669px;top:495px">Format</div><div class="dd" style="left:1791px;top:494px;width:119px">Automatic</div>
<div class="t" style="left:1669px;top:515px">Compression</div><div class="dd" style="left:1791px;top:514px;width:119px">None</div>
<div class="btn" style="left:1821px;top:549px;width:47px;background:#424242;border-color:#383838;color:#7d7d7d">Revert</div>
<div class="btn" style="left:1873px;top:549px;width:42px;background:#424242;border-color:#383838;color:#7d7d7d">Apply</div>
</body></html>
